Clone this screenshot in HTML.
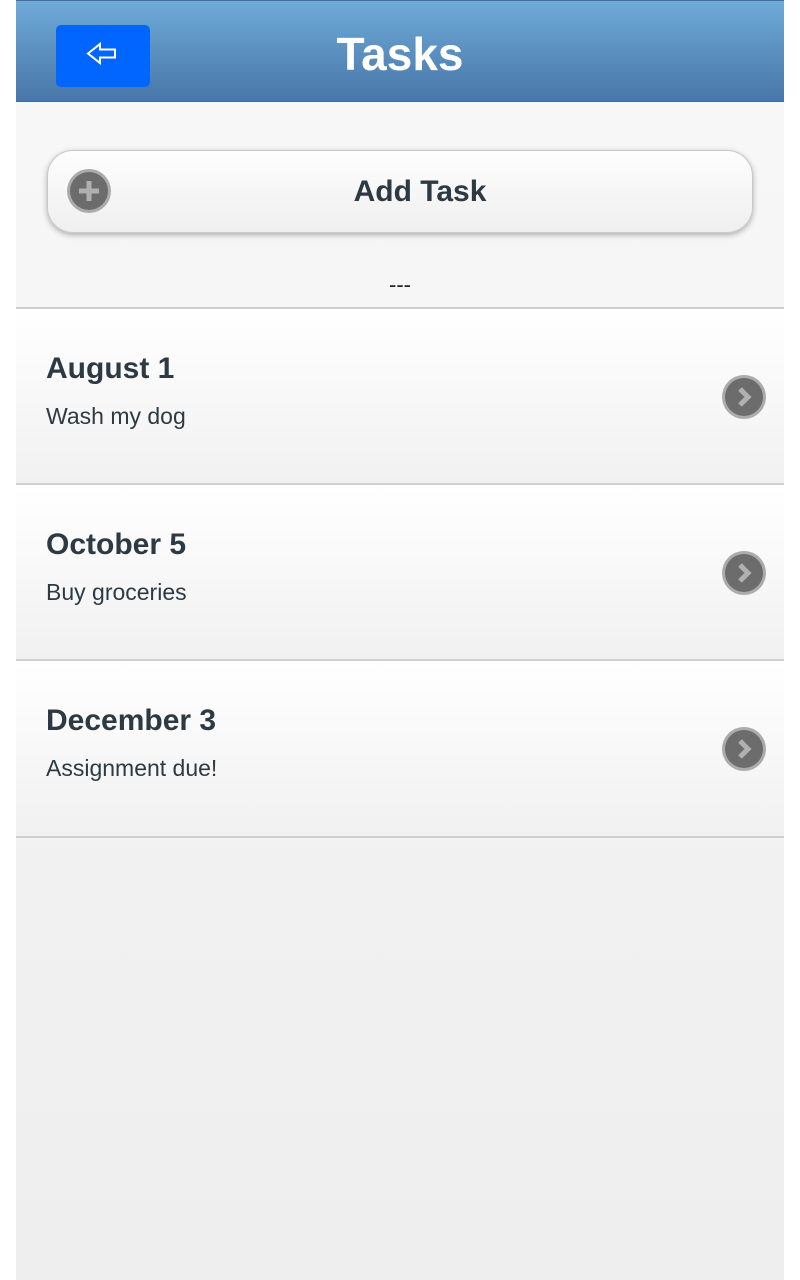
<!DOCTYPE html>
<html><head><style>
body{margin:0;width:800px;height:1280px;background:#fff;font-family:"Liberation Sans",Roboto,sans-serif;overflow:hidden}
.page{position:absolute;left:16px;top:0;width:768px;height:1280px;background:linear-gradient(#f8f8f8,#eeeeee)}
.hdr{position:absolute;left:0;top:0;width:768px;height:102px;background:linear-gradient(#6eabd8,#4876a9);border-top:1px solid #4a6f99;border-bottom:1px solid #416c9a;box-sizing:border-box}
.hdr h1{margin:0;position:absolute;left:0;right:0;top:25px;text-align:center;color:#fff;font-size:46px;font-weight:bold;line-height:56px}
.back{position:absolute;left:40px;top:24px;width:94px;height:62px;background:#0066ff;border-radius:5px}
.add{position:absolute;left:31px;top:150px;width:704px;height:81px;border:1px solid #c8c8c8;border-radius:26px;background:linear-gradient(#fefefe,#efefef);box-shadow:0 2px 6px rgba(0,0,0,.3)}
.add span{position:absolute;left:40px;right:0;top:24px;text-align:center;font-size:30px;font-weight:bold;color:#2d3a44}
.ic{position:absolute;width:44px;height:44px;border-radius:50%;background:#ababab}
.ic i{position:absolute;left:3px;top:3px;width:38px;height:38px;border-radius:50%;background:#6c6c6c}
.dash{position:absolute;left:0;right:0;top:272px;text-align:center;font-size:22px;color:#222}
.row{position:absolute;left:0;width:768px;height:176px;border-top:2px solid #cfcfcf;background:linear-gradient(#fff,#f1f1f1);box-sizing:border-box}
.row b{position:absolute;left:30px;top:43px;font-size:30px;color:#2d3a44}
.row p{position:absolute;left:30px;top:94px;margin:0;font-size:23px;color:#2d3a44}
.row .ic{left:706px;top:66px}
</style></head><body>
<div class="page">
<div class="hdr"><div class="back"><svg width="94" height="62"><path d="M32 28.5 L44 19 V24.5 H59 V32.5 H44 V38 Z" fill="none" stroke="#fff" stroke-width="2"/></svg></div><h1>Tasks</h1></div>
<div class="add"><div class="ic" style="left:19px;top:18px"><i></i><svg style="position:absolute;left:0;top:0" width="44" height="44"><path d="M22 12V32M12 22H32" stroke="#b0b0b0" stroke-width="5"/></svg></div><span>Add Task</span></div>
<div class="dash">---</div>
<div class="row" style="top:307px"><b>August 1</b><p>Wash my dog</p><div class="ic"><i></i><svg style="position:absolute;left:0;top:0" width="44" height="44"><path d="M18 14L26 22L18 30" fill="none" stroke="#b0b0b0" stroke-width="5"/></svg></div></div>
<div class="row" style="top:483px"><b>October 5</b><p>Buy groceries</p><div class="ic"><i></i><svg style="position:absolute;left:0;top:0" width="44" height="44"><path d="M18 14L26 22L18 30" fill="none" stroke="#b0b0b0" stroke-width="5"/></svg></div></div>
<div class="row" style="top:659px;border-bottom:2px solid #cfcfcf;height:179px"><b>December 3</b><p>Assignment due!</p><div class="ic"><i></i><svg style="position:absolute;left:0;top:0" width="44" height="44"><path d="M18 14L26 22L18 30" fill="none" stroke="#b0b0b0" stroke-width="5"/></svg></div></div>
</div>
</body></html>
